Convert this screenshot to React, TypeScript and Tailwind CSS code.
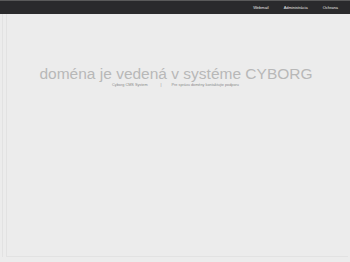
export default function App() {
  return (
    <div
      className="w-[350px] h-[262px] bg-[#ececec] flex flex-col overflow-hidden"
      style={{ fontFamily: '"Liberation Sans", Arial, sans-serif' }}
    >
      <div className="h-[14px] bg-[#2a2a2c] border-t border-[#5a5a5a] flex items-center justify-end pr-[12px] shrink-0">
        <nav className="flex items-center gap-[15px] text-[4px] text-[#e8e8e8]">
          <span>Webmail</span>
          <span>Administrácia</span>
          <span>Ochrana</span>
        </nav>
      </div>
      <div className="flex-1 flex pl-[2px] pr-[2px] pb-[5px]">
        <div className="flex-1 border-l border-[#e2e2e2] pl-[3px] flex">
          <div className="flex-1 border-l border-b border-[#e2e2e2] flex flex-col items-center pt-[51px]">
            <h1 className="text-[15.5px] leading-[18px] text-[#b8b8b8] pr-[3px]">
              doména je vedená v systéme CYBORG
            </h1>
            <div className="flex items-center text-[3.8px] text-[#8a8a8a] pr-[4px]">
              <span>Cyborg CMS System</span>
              <span className="ml-[13px] mr-[10px]">|</span>
              <span>Pre správu domény kontaktujte podporu</span>
            </div>
          </div>
        </div>
      </div>
    </div>
  )
}
